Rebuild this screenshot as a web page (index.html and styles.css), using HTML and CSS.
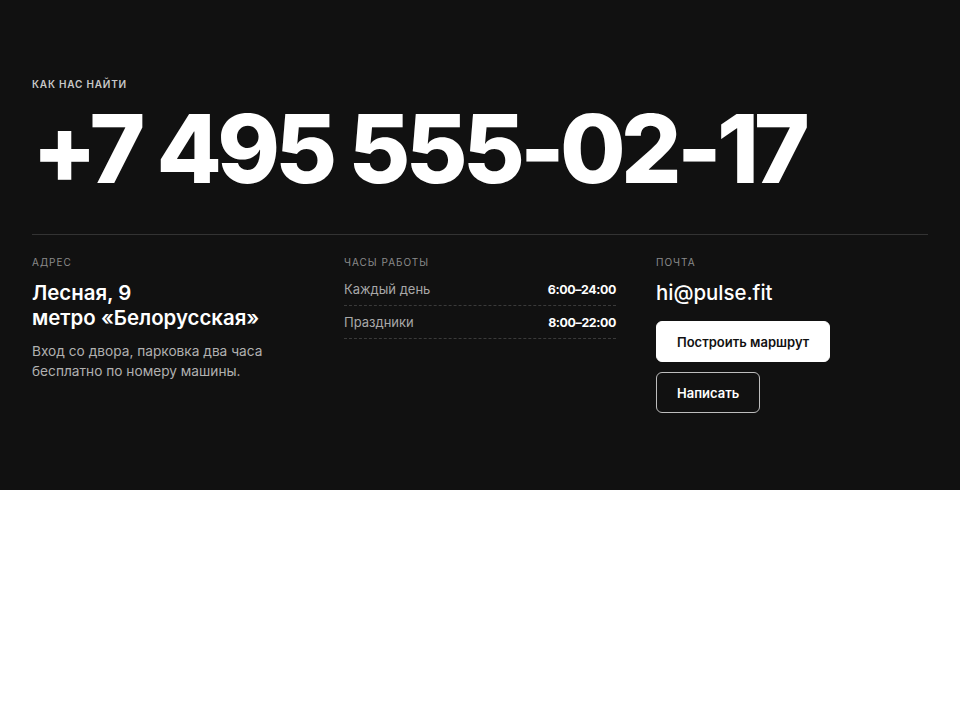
FILE: index.html
```html
<!DOCTYPE html>
<html lang="ru">
<head>
	<meta charset="utf-8">
	<title>Контакты</title>
	<link rel="stylesheet" href="styles.css">
</head>
<body>
	<section class="contacts">
		<div class="eyebrow">Как нас найти</div>
		<div class="phone">+7 495 555-02-17</div>
		<div class="info">
			<div class="col">
				<div class="label">Адрес</div>
				<div class="big">Лесная, 9<br>метро «Белорусская»</div>
				<p class="note">Вход со двора, парковка два часа бесплатно по номеру машины.</p>
			</div>
			<div class="col">
				<div class="label">Часы работы</div>
				<ul class="hours">
					<li><span>Каждый день</span><b>6:00–24:00</b></li>
					<li><span>Праздники</span><b>8:00–22:00</b></li>
				</ul>
			</div>
			<div class="col">
				<div class="label">Почта</div>
				<div class="big mail">hi@pulse.fit</div>
				<div class="actions">
					<button class="btn btn-light">Построить маршрут</button>
					<button class="btn btn-ghost">Написать</button>
				</div>
			</div>
		</div>
	</section>
</body>
</html>
```

FILE: styles.css
```css
body {
	margin: 0;
	background: #fff;
	font-family: Inter, "Noto Sans", sans-serif;
}

.contacts {
	background: #111;
	color: #fff;
	padding: 78px 32px 77px;
	height: 335px;
}

.eyebrow {
	font-size: 10px;
	font-weight: 600;
	letter-spacing: 0.08em;
	text-transform: uppercase;
	color: #c8c8c8;
	line-height: 12px;
}

.phone {
	font-size: 95px;
	font-weight: 800;
	letter-spacing: -0.05em;
	line-height: 1;
	margin-top: 11px;
	padding-bottom: 38px;
	border-bottom: 1px solid #333;
}

.info {
	display: grid;
	grid-template-columns: repeat(3, 1fr);
	gap: 40px;
	padding-top: 21px;
}

.label {
	font-size: 10px;
	letter-spacing: 0.1em;
	text-transform: uppercase;
	color: #8a8a8a;
	line-height: 12px;
	margin-bottom: 12px;
}

.big {
	font-size: 20.4px;
	font-weight: 600;
	line-height: 25px;
}

.mail {
	font-weight: 500;
}

.note {
	margin: 11px 0 0;
	font-size: 13.7px;
	line-height: 20px;
	color: #b0b0b0;
}

.hours {
	list-style: none;
	margin: 0;
	padding: 0;
	margin-top: -7px;
}

.hours li {
	display: flex;
	justify-content: space-between;
	align-items: center;
	height: 32px;
	border-bottom: 1px dashed #3a3a3a;
	font-size: 13px;
}

.hours span {
	color: #a8a8a8;
}

.hours b {
	font-size: 12.4px;
	font-weight: 700;
	letter-spacing: -0.03em;
}

.actions {
	display: flex;
	flex-direction: column;
	align-items: flex-start;
	gap: 10px;
	margin-top: 16px;
}

.btn {
	font-family: inherit;
	font-size: 13px;
	font-weight: 600;
	height: 41px;
	padding: 0 20px;
	border-radius: 6px;
	cursor: pointer;
}

.btn-light {
	background: #fff;
	color: #111;
	border: 1px solid #fff;
}

.btn-ghost {
	background: transparent;
	color: #fff;
	border: 1px solid #bdbdbd;
}
```
